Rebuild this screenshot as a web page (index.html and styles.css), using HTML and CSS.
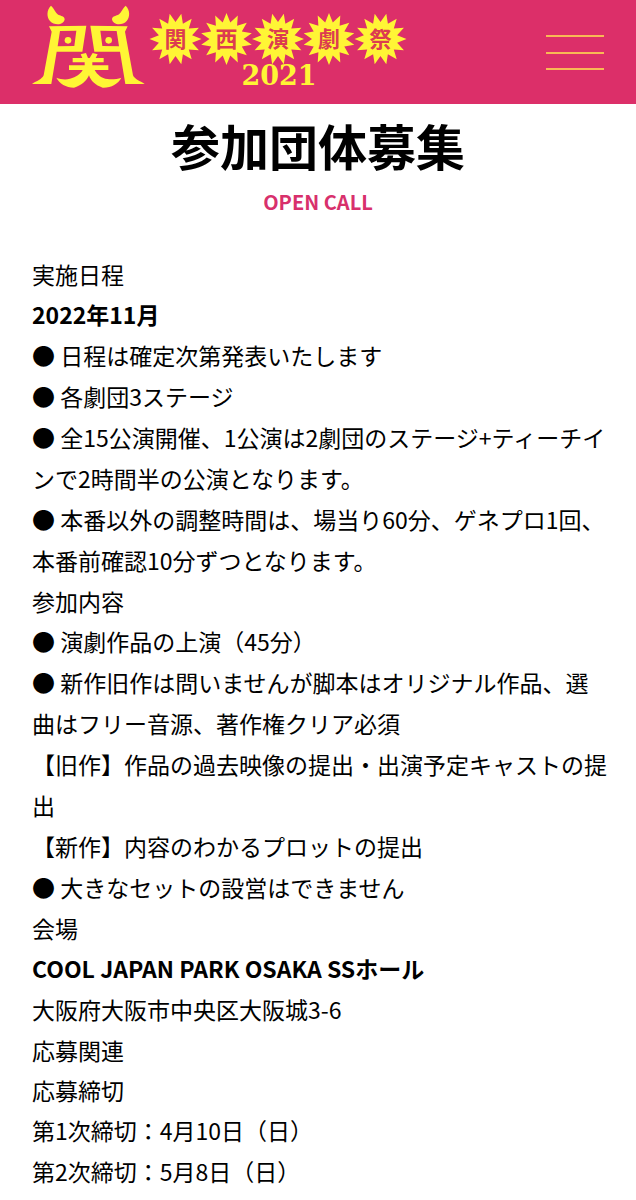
FILE: index.html
```html
<!DOCTYPE html>
<html lang="ja">
<head>
<meta charset="utf-8">
<meta name="viewport" content="width=device-width, initial-scale=1">
<title>参加団体募集 | 関西演劇祭2021</title>
<link rel="stylesheet" href="styles.css">
</head>
<body>
<header class="site-header">
  <a class="logo" href="#" aria-label="関西演劇祭2021">
    <svg class="logo-art" width="376" height="94" viewBox="32 5 376 94">
      <defs>
        <polygon id="burst" points="26,0 16.6,3.8 23.4,11.3 13.3,10.6 16.2,20.3 7.4,15.3 5.8,25.3 0,17 -5.8,25.3 -7.4,15.3 -16.2,20.3 -13.3,10.6 -23.4,11.3 -16.6,3.8 -26,0 -16.6,-3.8 -23.4,-11.3 -13.3,-10.6 -16.2,-20.3 -7.4,-15.3 -5.8,-25.3 0,-17 5.8,-25.3 7.4,-15.3 16.2,-20.3 13.3,-10.6 23.4,-11.3 16.6,-3.8"/>
        <g id="gate">
          <path d="M93 17C79 30 80 52 90 63C102 77 131 77 134 58C133 49 126 49 119 46C106 41 106 30 93 17Z"/>
          <path fill-rule="evenodd" d="M87 79L199 77L187 155L110 155L94 252L36 252C50 243 66 238 71 226L95 95ZM120 93L169 92L163 138L113 139Z"/>
          <circle cx="144" cy="121" r="10"/>
        </g>
      </defs>
      <g class="logo-yellow">
        <g transform="translate(20 0) scale(.33333)">
          <use href="#gate"/>
          <use href="#gate" transform="translate(410 0) scale(-1 1)"/>
          <path d="M182 163L198 159L204 174H209L218 159L233 163L227 174H251V187H217V196H265V210H224C232 225 246 235 262 237C277 239 291 237 304 233C294 252 273 264 248 263C226 256 212 242 207 226C200 242 184 257 162 263C138 263 118 250 109 233C122 238 137 240 150 236C168 231 182 222 188 210H147V196H194V187H158V174H187Z"/>
        </g>
        <use href="#burst" x="175.5" y="39"/>
        <use href="#burst" transform="translate(226.5 39) rotate(90)"/>
        <use href="#burst" x="278" y="39"/>
        <use href="#burst" transform="translate(329 39) rotate(90)"/>
        <use href="#burst" x="380.5" y="39"/>
        <text class="logo-year" x="279" y="85">2021</text>
      </g>
      <g class="logo-name">
        <text x="175.5" y="47">関</text>
        <text x="226.5" y="47">西</text>
        <text x="278" y="47">演</text>
        <text x="329" y="47">劇</text>
        <text x="380.5" y="47">祭</text>
      </g>
    </svg>
  </a>
  <button class="menu" type="button" aria-label="メニュー">
    <span class="menu-line"></span>
    <span class="menu-line"></span>
    <span class="menu-line"></span>
  </button>
</header>
<main>
  <div class="page-title">
    <h1 class="title">参加団体募集</h1>
    <p class="subtitle">OPEN CALL</p>
  </div>
  <dl class="details">
    <dt>実施日程</dt>
    <dd><strong>2022年11月</strong></dd>
    <dd>● 日程は確定次第発表いたします</dd>
    <dd>● 各劇団3ステージ</dd>
    <dd>● 全15公演開催、1公演は2劇団のステージ+ティーチインで2時間半の公演となります。</dd>
    <dd>● 本番以外の調整時間は、場当り60分、ゲネプロ1回、本番前確認10分ずつとなります。</dd>
    <dt>参加内容</dt>
    <dd>● 演劇作品の上演（45分）</dd>
    <dd>● 新作旧作は問いませんが脚本はオリジナル作品、選曲はフリー音源、著作権クリア必須</dd>
    <dd>【旧作】作品の過去映像の提出・出演予定キャストの提出</dd>
    <dd>【新作】内容のわかるプロットの提出</dd>
    <dd>● 大きなセットの設営はできません</dd>
    <dt>会場</dt>
    <dd><strong>COOL JAPAN PARK OSAKA SSホール</strong></dd>
    <dd>大阪府大阪市中央区大阪城3-6</dd>
    <dt>応募関連</dt>
    <dt>応募締切</dt>
    <dd>第1次締切：4月10日（日）</dd>
    <dd>第2次締切：5月8日（日）</dd>
  </dl>
</main>
</body>
</html>
```
FILE: styles.css
```css
* {
  box-sizing: border-box;
}

body {
  margin: 0;
  background: #fff;
  color: #000;
  font-family: "Noto Sans CJK JP", sans-serif;
  font-size: 23px;
  line-height: 41px;
  text-spacing-trim: space-all;
}

.site-header {
  display: flex;
  align-items: flex-start;
  justify-content: space-between;
  padding: 5px 32px;
  background: #dc2f69;
}

.logo,
.logo-art {
  display: block;
}

.logo-yellow {
  fill: #fff535;
}

.logo-name {
  fill: #dc3c50;
  font-size: 22px;
  font-weight: 700;
  text-anchor: middle;
}

.logo-year {
  font-family: "DejaVu Serif", serif;
  font-size: 27px;
  font-weight: 700;
  text-anchor: middle;
}

.menu {
  display: flex;
  flex-direction: column;
  justify-content: space-between;
  width: 58px;
  height: 35px;
  margin: 30px 0 0;
  padding: 0;
  border: 0;
  background: none;
  cursor: pointer;
}

.menu-line {
  height: 2px;
  background: #f8b955;
}

.page-title {
  padding-top: 13px;
  text-align: center;
}

.title {
  margin: 0;
  font-size: 49px;
  font-weight: 700;
  line-height: 56px;
}

.subtitle {
  margin: 14px 0 0;
  color: #d8306c;
  font-size: 20px;
  font-weight: 700;
  line-height: 30px;
}

.details {
  margin: 0;
  padding: 37px 28px 8px 32px;
}

.details dt {
  line-height: 40px;
}

.details dd {
  margin: 0;
}
```
